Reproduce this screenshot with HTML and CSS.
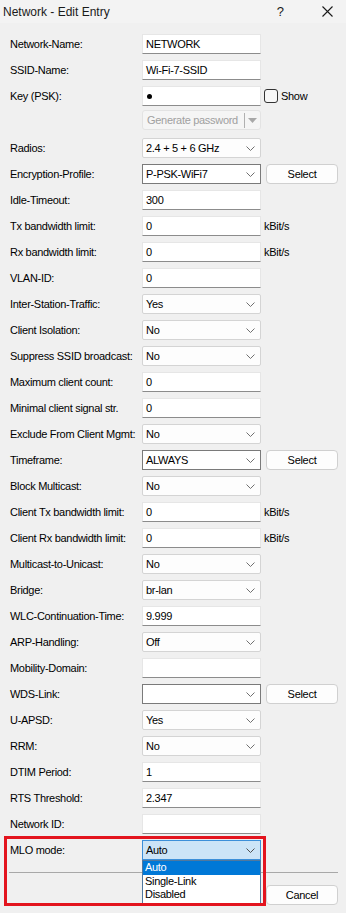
FILE: index.html
```html
<!DOCTYPE html>
<html>
<head>
<meta charset="utf-8">
<link rel="stylesheet" href="styles.css">
</head>
<body>
<div class="dialog">
  <div class="titlebar">
    <span class="title">Network - Edit Entry</span>
    <span class="tb-help">?</span>
    <svg class="tb-close" width="11" height="11" viewBox="0 0 11 11"><path d="M0.5 0.5 L10.5 10.5 M10.5 0.5 L0.5 10.5" stroke="#1a1a1a" stroke-width="1.1" fill="none"/></svg>
  </div>

  <div class="form">
    <div class="row"><span class="lbl">Network-Name:</span><div class="field input">NETWORK</div></div>
    <div class="row"><span class="lbl">SSID-Name:</span><div class="field input">Wi-Fi-7-SSID</div></div>
    <div class="row"><span class="lbl">Key (PSK):</span><div class="field input"><span class="dot"></span></div><span class="check"></span><span class="show">Show</span></div>
    <div class="row gen-row"><span class="lbl"></span><div class="field gen"><span class="gen-text">Generate password</span><span class="gen-sep"></span><svg class="gen-arrow" width="9" height="5" viewBox="0 0 9 5"><path d="M0 0 L9 0 L4.5 5 Z" fill="#a8a8a8"/></svg></div></div>

    <div class="row"><span class="lbl">Radios:</span><div class="field select">2.4 + 5 + 6 GHz<svg class="chev" width="9" height="5" viewBox="0 0 9 5"><path d="M0.5 0.5 L4.5 4.5 L8.5 0.5" stroke="#707070" fill="none"/></svg></div></div>
    <div class="row"><span class="lbl">Encryption-Profile:</span><div class="field select edit">P-PSK-WiFi7<svg class="chev" width="9" height="5" viewBox="0 0 9 5"><path d="M0.5 0.5 L4.5 4.5 L8.5 0.5" stroke="#707070" fill="none"/></svg></div><div class="btn">Select</div></div>
    <div class="row"><span class="lbl">Idle-Timeout:</span><div class="field input">300</div></div>
    <div class="row"><span class="lbl">Tx bandwidth limit:</span><div class="field input">0</div><span class="unit">kBit/s</span></div>
    <div class="row"><span class="lbl">Rx bandwidth limit:</span><div class="field input">0</div><span class="unit">kBit/s</span></div>
    <div class="row"><span class="lbl">VLAN-ID:</span><div class="field input">0</div></div>
    <div class="row"><span class="lbl">Inter-Station-Traffic:</span><div class="field select">Yes<svg class="chev" width="9" height="5" viewBox="0 0 9 5"><path d="M0.5 0.5 L4.5 4.5 L8.5 0.5" stroke="#707070" fill="none"/></svg></div></div>
    <div class="row"><span class="lbl">Client Isolation:</span><div class="field select">No<svg class="chev" width="9" height="5" viewBox="0 0 9 5"><path d="M0.5 0.5 L4.5 4.5 L8.5 0.5" stroke="#707070" fill="none"/></svg></div></div>
    <div class="row"><span class="lbl">Suppress SSID broadcast:</span><div class="field select">No<svg class="chev" width="9" height="5" viewBox="0 0 9 5"><path d="M0.5 0.5 L4.5 4.5 L8.5 0.5" stroke="#707070" fill="none"/></svg></div></div>
    <div class="row"><span class="lbl">Maximum client count:</span><div class="field input">0</div></div>
    <div class="row"><span class="lbl">Minimal client signal str.</span><div class="field input">0</div></div>
    <div class="row"><span class="lbl">Exclude From Client Mgmt:</span><div class="field select">No<svg class="chev" width="9" height="5" viewBox="0 0 9 5"><path d="M0.5 0.5 L4.5 4.5 L8.5 0.5" stroke="#707070" fill="none"/></svg></div></div>
    <div class="row"><span class="lbl">Timeframe:</span><div class="field select edit">ALWAYS<svg class="chev" width="9" height="5" viewBox="0 0 9 5"><path d="M0.5 0.5 L4.5 4.5 L8.5 0.5" stroke="#707070" fill="none"/></svg></div><div class="btn">Select</div></div>
    <div class="row"><span class="lbl">Block Multicast:</span><div class="field select">No<svg class="chev" width="9" height="5" viewBox="0 0 9 5"><path d="M0.5 0.5 L4.5 4.5 L8.5 0.5" stroke="#707070" fill="none"/></svg></div></div>
    <div class="row"><span class="lbl">Client Tx bandwidth limit:</span><div class="field input">0</div><span class="unit">kBit/s</span></div>
    <div class="row"><span class="lbl">Client Rx bandwidth limit:</span><div class="field input">0</div><span class="unit">kBit/s</span></div>
    <div class="row"><span class="lbl">Multicast-to-Unicast:</span><div class="field select">No<svg class="chev" width="9" height="5" viewBox="0 0 9 5"><path d="M0.5 0.5 L4.5 4.5 L8.5 0.5" stroke="#707070" fill="none"/></svg></div></div>
    <div class="row"><span class="lbl">Bridge:</span><div class="field select">br-lan<svg class="chev" width="9" height="5" viewBox="0 0 9 5"><path d="M0.5 0.5 L4.5 4.5 L8.5 0.5" stroke="#707070" fill="none"/></svg></div></div>
    <div class="row"><span class="lbl">WLC-Continuation-Time:</span><div class="field input">9.999</div></div>
    <div class="row"><span class="lbl">ARP-Handling:</span><div class="field select">Off<svg class="chev" width="9" height="5" viewBox="0 0 9 5"><path d="M0.5 0.5 L4.5 4.5 L8.5 0.5" stroke="#707070" fill="none"/></svg></div></div>
    <div class="row"><span class="lbl">Mobility-Domain:</span><div class="field input"></div></div>
    <div class="row"><span class="lbl">WDS-Link:</span><div class="field select edit"><svg class="chev" width="9" height="5" viewBox="0 0 9 5"><path d="M0.5 0.5 L4.5 4.5 L8.5 0.5" stroke="#707070" fill="none"/></svg></div><div class="btn">Select</div></div>
    <div class="row"><span class="lbl">U-APSD:</span><div class="field select">Yes<svg class="chev" width="9" height="5" viewBox="0 0 9 5"><path d="M0.5 0.5 L4.5 4.5 L8.5 0.5" stroke="#707070" fill="none"/></svg></div></div>
    <div class="row"><span class="lbl">RRM:</span><div class="field select">No<svg class="chev" width="9" height="5" viewBox="0 0 9 5"><path d="M0.5 0.5 L4.5 4.5 L8.5 0.5" stroke="#707070" fill="none"/></svg></div></div>
    <div class="row"><span class="lbl">DTIM Period:</span><div class="field input">1</div></div>
    <div class="row"><span class="lbl">RTS Threshold:</span><div class="field input">2.347</div></div>
    <div class="row"><span class="lbl">Network ID:</span><div class="field input"></div></div>
    <div class="row mlo-row"><span class="lbl">MLO mode:</span>
      <div class="field select active">Auto<svg class="chev" width="9" height="5" viewBox="0 0 9 5"><path d="M0.5 0.5 L4.5 4.5 L8.5 0.5" stroke="#505050" fill="none"/></svg>
        <div class="droplist">
          <div class="opt sel">Auto</div>
          <div class="opt">Single-Link</div>
          <div class="opt">Disabled</div>
        </div>
      </div>
    </div>
  </div>

  <div class="sep"></div>
  <div class="footer">
    <div class="btn ok">OK</div>
    <div class="btn">Cancel</div>
  </div>
  <div class="highlight"></div>
</div>
</body>
</html>
```

FILE: styles.css
```css
html, body {
  margin: 0;
  padding: 0;
  background: #f0f0f0;
}
body {
  width: 346px;
  height: 913px;
  overflow: hidden;
  font-family: "Liberation Sans", Arial, sans-serif;
  font-size: 11px;
  letter-spacing: -0.3px;
  color: #000;
}
.dialog {
  position: relative;
  width: 346px;
  height: 913px;
}
.titlebar {
  height: 23px;
  background: #f3f3f3;
  display: flex;
  align-items: center;
  padding-left: 3px;
  font-size: 12px;
  letter-spacing: 0;
  color: #1a1a1a;
}
.title {
  flex: 1;
}
.tb-help {
  font-size: 13px;
  margin-right: 38px;
  margin-top: -1px;
}
.tb-close {
  margin-right: 13px;
}
.form {
  padding: 11px 0 0 10px;
}
.row {
  display: flex;
  align-items: center;
  height: 20px;
  margin-bottom: 6px;
}
.lbl {
  width: 132px;
  flex: none;
  white-space: nowrap;
}
.field {
  position: relative;
  width: 119px;
  height: 20px;
  box-sizing: border-box;
  flex: none;
  display: flex;
  align-items: center;
  padding-left: 3px;
}
.input {
  background: #fff;
  border: 1px solid #e6e6e6;
  border-bottom-color: #8c8c8c;
}
.select {
  background: #fdfdfd;
  border: 1px solid #d4d4d4;
  border-radius: 2px;
}
.select.edit {
  background: #fff;
  border-color: #7a7a7a;
  border-radius: 0;
}
.chev {
  position: absolute;
  right: 5px;
  top: 7px;
}
.dot {
  width: 5px;
  height: 5px;
  border-radius: 50%;
  background: #000;
  margin-left: 1px;
}
.check {
  width: 12px;
  height: 12px;
  border: 1px solid #333;
  border-radius: 3px;
  background: #f7f7f7;
  margin-left: 3px;
  flex: none;
}
.show {
  margin-left: 3px;
}
.gen-row {
  margin-top: -2px;
  margin-bottom: 8px;
}
.gen {
  background: #f5f5f5;
  border: 1px solid #e3e3e3;
  border-radius: 3px;
  color: #a0a0a0;
  padding-left: 4px;
}
.gen-text {
  flex: 1;
  white-space: nowrap;
}
.gen-sep {
  width: 1px;
  height: 15px;
  background: #b0b0b0;
  margin-right: 3px;
}
.gen-arrow {
  margin-right: 3px;
}
.unit {
  margin-left: 3px;
}
.btn {
  width: 72px;
  height: 20px;
  box-sizing: border-box;
  border: 1px solid #d0d0d0;
  border-radius: 4px;
  background: #fdfdfd;
  display: flex;
  align-items: center;
  justify-content: center;
  margin-left: 5px;
  flex: none;
}
.select.active {
  background: #cce4f7;
  border-color: #3c8fd9;
  border-radius: 0;
}
.droplist {
  position: absolute;
  left: -1px;
  top: 19px;
  width: 119px;
  box-sizing: border-box;
  border: 1px solid #50789e;
  background: #fff;
  z-index: 5;
  padding-bottom: 1px;
}
.opt {
  height: 13.5px;
  line-height: 13px;
  padding-left: 2px;
}
.opt.sel {
  background: #0078d7;
  color: #fff;
}
.sep {
  height: 1px;
  background: #a8a8a8;
  margin: 12px 8px 0 9px;
}
.footer {
  display: flex;
  justify-content: flex-end;
  padding-right: 8px;
  margin-top: 12px;
}
.footer .btn {
  margin-left: 9px;
}
.highlight {
  position: absolute;
  left: 4px;
  top: 836px;
  width: 262px;
  height: 70px;
  box-sizing: border-box;
  border: 3px solid #e3141e;
  z-index: 6;
  pointer-events: none;
}
```
